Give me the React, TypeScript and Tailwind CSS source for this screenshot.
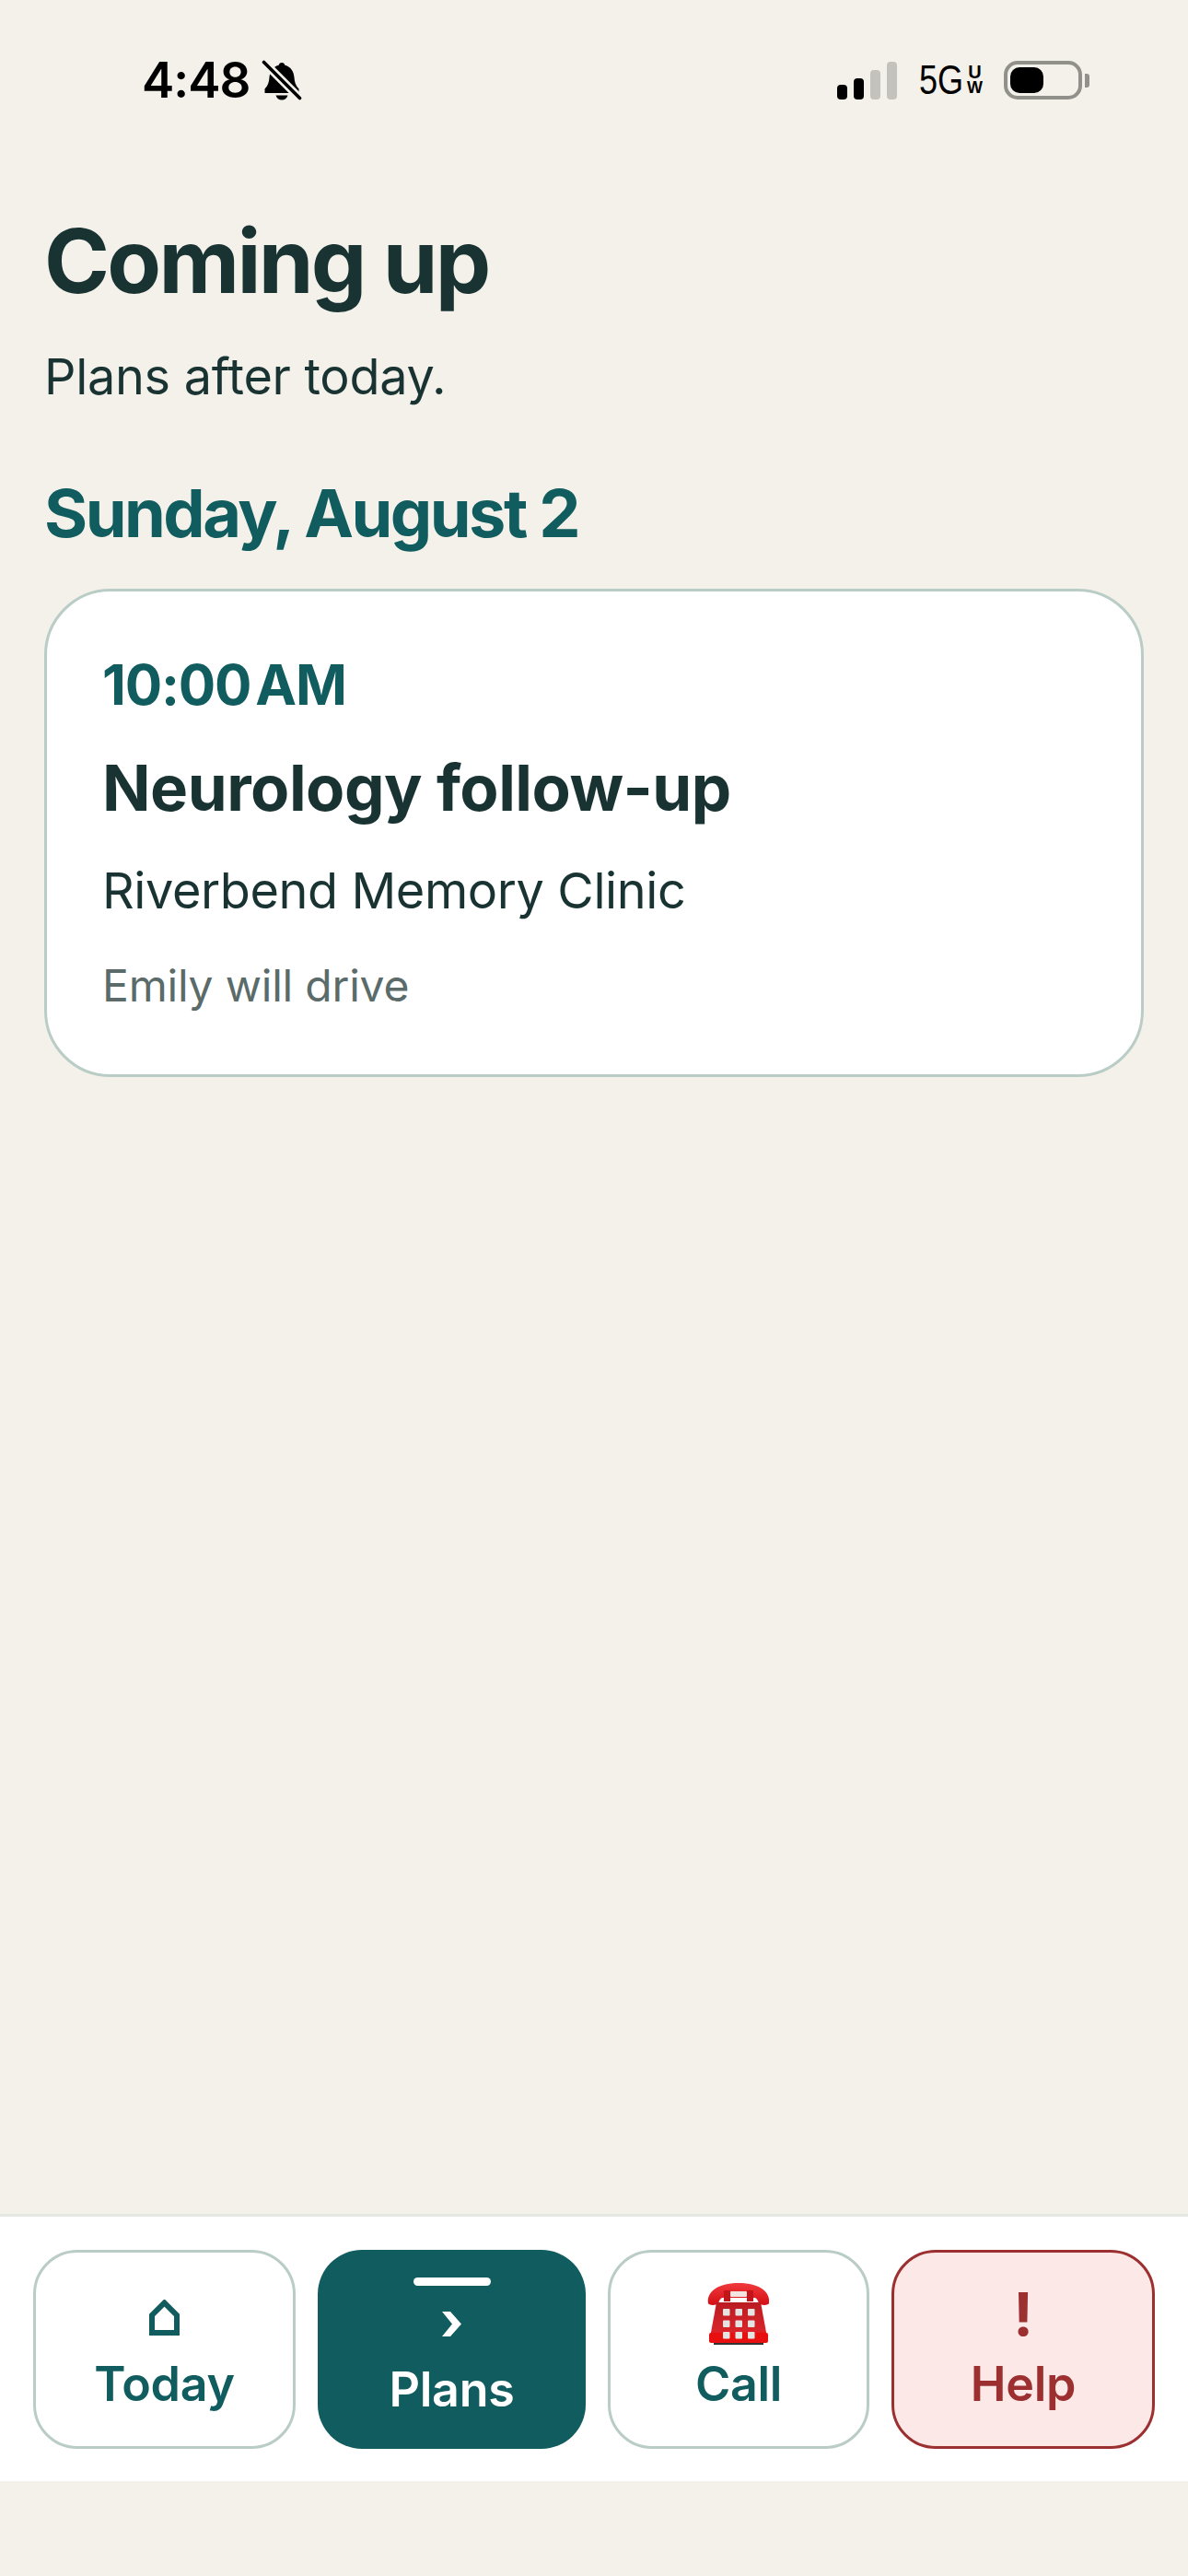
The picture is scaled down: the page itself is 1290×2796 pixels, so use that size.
import type { ReactNode } from "react";

const INTER = "font-['Inter','Noto_Sans',sans-serif]";

function BellOff() {
  return (
    <svg width="44" height="44" viewBox="0 0 44 44" className="ml-[13px]">
      <path d="M22 3c1.800 0 3 1.200 3.400 2.800C32 7.500 35 13 35.500 19c.3 5 1.500 9 5 12.500V36H3.500v-4.500c3.500-3.500 4.700-7.500 5-12.500C9 13 12 7.500 18.600 5.800 19 4.200 20.200 3 22 3z" fill="#000" />
      <path d="M15.500 38.500h13c-.8 3-3.400 5-6.500 5s-5.700-2-6.500-5z" fill="#000" />
      <path d="M2 2l40 40" stroke="#f4f1ea" strokeWidth="9" />
      <path d="M2.500 2.500l39 39" stroke="#000" strokeWidth="3.600" strokeLinecap="round" />
    </svg>
  );
}

function Signal() {
  const bars = [
    { h: 16, c: "bg-black" },
    { h: 23, c: "bg-black" },
    { h: 32, c: "bg-[#c4c2bc]" },
    { h: 41, c: "bg-[#c4c2bc]" },
  ];
  return (
    <div className="flex h-[41px] items-end gap-[7px]">
      {bars.map((b, i) => (
        <div key={i} className={`w-[11px] rounded-[4px] ${b.c}`} style={{ height: b.h }} />
      ))}
    </div>
  );
}

function Battery() {
  return (
    <div className="flex items-center">
      <div className="flex h-[42px] w-[85px] items-center rounded-[15px] border-[4px] border-[#92908a] pl-[3px]">
        <div className="h-[28px] w-[36px] rounded-[10px] bg-black" />
      </div>
      <div className="ml-[3px] h-[15px] w-[5px] rounded-r-[3px] bg-[#92908a]" />
    </div>
  );
}

function StatusBar() {
  return (
    <div className="flex h-[170px] shrink-0 items-start justify-between pl-[154px] pr-[107px] pt-[57px]">
      <div className="flex items-center">
        <span className={`${INTER} text-[53px] font-semibold leading-[60px] tracking-[-1px] text-black`}>4:48</span>
        <BellOff />
      </div>
      <div className="flex items-center pt-[9px]">
        <Signal />
        <span className="ml-[24px] w-[51px] origin-left font-['Liberation_Sans',sans-serif] text-[44px] leading-[42px] text-black [transform:scaleX(0.82)]">5G</span>
        <div className="flex w-[19px] flex-col items-center font-['Liberation_Sans',sans-serif] text-[20px] font-bold leading-[17px] text-black">
          <span>U</span>
          <span className="text-[18px]">W</span>
        </div>
        <div className="ml-[22px]">
          <Battery />
        </div>
      </div>
    </div>
  );
}

function HomeIcon() {
  return (
    <svg width="33" height="39" viewBox="0 0 33 39">
      <path d="M3 36V17L16.500 3.500 30 17v19z" fill="none" stroke="#115c5e" strokeWidth="6" />
    </svg>
  );
}

function Chevron() {
  return (
    <svg width="21" height="27" viewBox="0 0 21 27">
      <path d="M0 0h9l12 13.500L9 27H0l11-13.500z" fill="#fff" />
    </svg>
  );
}

function PhoneEmoji() {
  const keys = [0, 1, 2, 3, 4, 5, 6, 7, 8];
  return (
    <svg width="70" height="67" viewBox="0 0 70 67">
      <defs>
        <linearGradient id="body" x1="0" y1="0" x2="0" y2="1">
          <stop offset="0" stopColor="#b91c22" />
          <stop offset="0.8" stopColor="#d8242a" />
          <stop offset="1" stopColor="#ee1010" />
        </linearGradient>
        <linearGradient id="hand" x1="0" y1="0" x2="0" y2="1">
          <stop offset="0" stopColor="#f03a3c" />
          <stop offset="1" stopColor="#d40f16" />
        </linearGradient>
      </defs>
      <path d="M2 22C0 10 12 0 35 0s35 10 33 22c0 2-8 3-11 0-1-3-2-5-4-6H17c-2 1-3 3-4 6-3 3-11 2-11 0z" fill="url(#hand)" />
      <rect x="19" y="8" width="7" height="12" fill="#c3141a" />
      <rect x="44" y="8" width="7" height="12" fill="#c3141a" />
      <rect x="26" y="9" width="18" height="6" rx="1" fill="#f3e4e2" />
      <path d="M11 21h48l7 38H4z" fill="url(#body)" />
      <rect x="3" y="54" width="64" height="11" rx="2" fill="#e80f10" />
      <rect x="8" y="65" width="54" height="2" fill="#333" />
      {keys.map((k) => (
        <rect
          key={k}
          x={18 + (k % 3) * 13.500}
          y={28 + Math.floor(k / 3) * 12.500}
          width="7.500"
          height="7.500"
          rx="1"
          fill="#e4e4e2"
        />
      ))}
    </svg>
  );
}

function NavButton({ className, icon, label }: { className: string; icon: ReactNode; label: string }) {
  return (
    <button className={`flex h-[216px] flex-col items-center justify-center rounded-[48px] ${className}`}>
      {icon}
      <span className={`${INTER} text-[52px] font-semibold leading-[60px] tracking-[-0.3px]`}>{label}</span>
    </button>
  );
}

export default function App() {
  return (
    <div className="flex min-h-[2796px] flex-col bg-[#f4f1ea] text-[#193333]">
      <StatusBar />

      <main className="flex-1 px-[48px]">
        <h1 className={`${INTER} mt-[56px] text-[96px] font-bold leading-[114px] tracking-[-2.700px]`}>Coming up</h1>
        <p className={`${INTER} mt-[33px] text-[54px] leading-[72px] tracking-[-0.3px]`}>Plans after today.</p>
        <h2 className={`${INTER} mt-[70px] text-[72px] font-bold leading-[84px] tracking-[-2.500px] text-[#115c5e]`}>Sunday, August 2</h2>

        <div className="mt-[40px] flex h-[530px] flex-col rounded-[72px] border-[3px] border-[#b9cdc6] bg-white pl-[60px] pt-[65px]">
          <div className={`${INTER} text-[60px] font-bold leading-[72px] tracking-[-1.200px] text-[#115c5e] [word-spacing:-8px]`}>10:00 AM</div>
          <div className={`${INTER} mt-[34px] text-[69px] font-bold leading-[84px] tracking-[-0.5px]`}>Neurology follow-up</div>
          <div className={`${INTER} mt-[34px] text-[54px] leading-[72px] tracking-[-0.4px]`}>Riverbend Memory Clinic</div>
          <div className={`${INTER} mt-[37px] text-[48px] leading-[60px] tracking-[-0.2px] text-[#5a6b6a]`}>Emily will drive</div>
        </div>
      </main>

      <nav className="mb-[103px] grid h-[290px] shrink-0 grid-cols-[285px_291px_284px_286px] content-start gap-x-[24px] border-t-[3px] border-[#e3e8e3] bg-white px-[36px] pt-[36px]">
        <NavButton
          className="border-[3px] border-[#b9cdc6] bg-white pt-[14px] text-[#115c5e]"
          icon={<div className="mb-[23px] h-[39px]"><HomeIcon /></div>}
          label="Today"
        />
        <NavButton
          className="bg-[#115c5e] pb-[4px] text-white"
          icon={
            <>
              <div className="mb-[28px] h-[9px] w-[84px] rounded-full bg-white" />
              <div className="mb-[28px] h-[27px]"><Chevron /></div>
            </>
          }
          label="Plans"
        />
        <NavButton
          className="border-[3px] border-[#b9cdc6] bg-white pb-[4px] text-[#115c5e]"
          icon={<div className="mb-[13px] h-[67px]"><PhoneEmoji /></div>}
          label="Call"
        />
        <NavButton
          className="border-[3px] border-[#9c3030] bg-[#fce8e6] pb-[2px] text-[#9c3030]"
          icon={<span className={`${INTER} mb-[14px] text-[64px] font-bold leading-[64px]`}>!</span>}
          label="Help"
        />
      </nav>
    </div>
  );
}
